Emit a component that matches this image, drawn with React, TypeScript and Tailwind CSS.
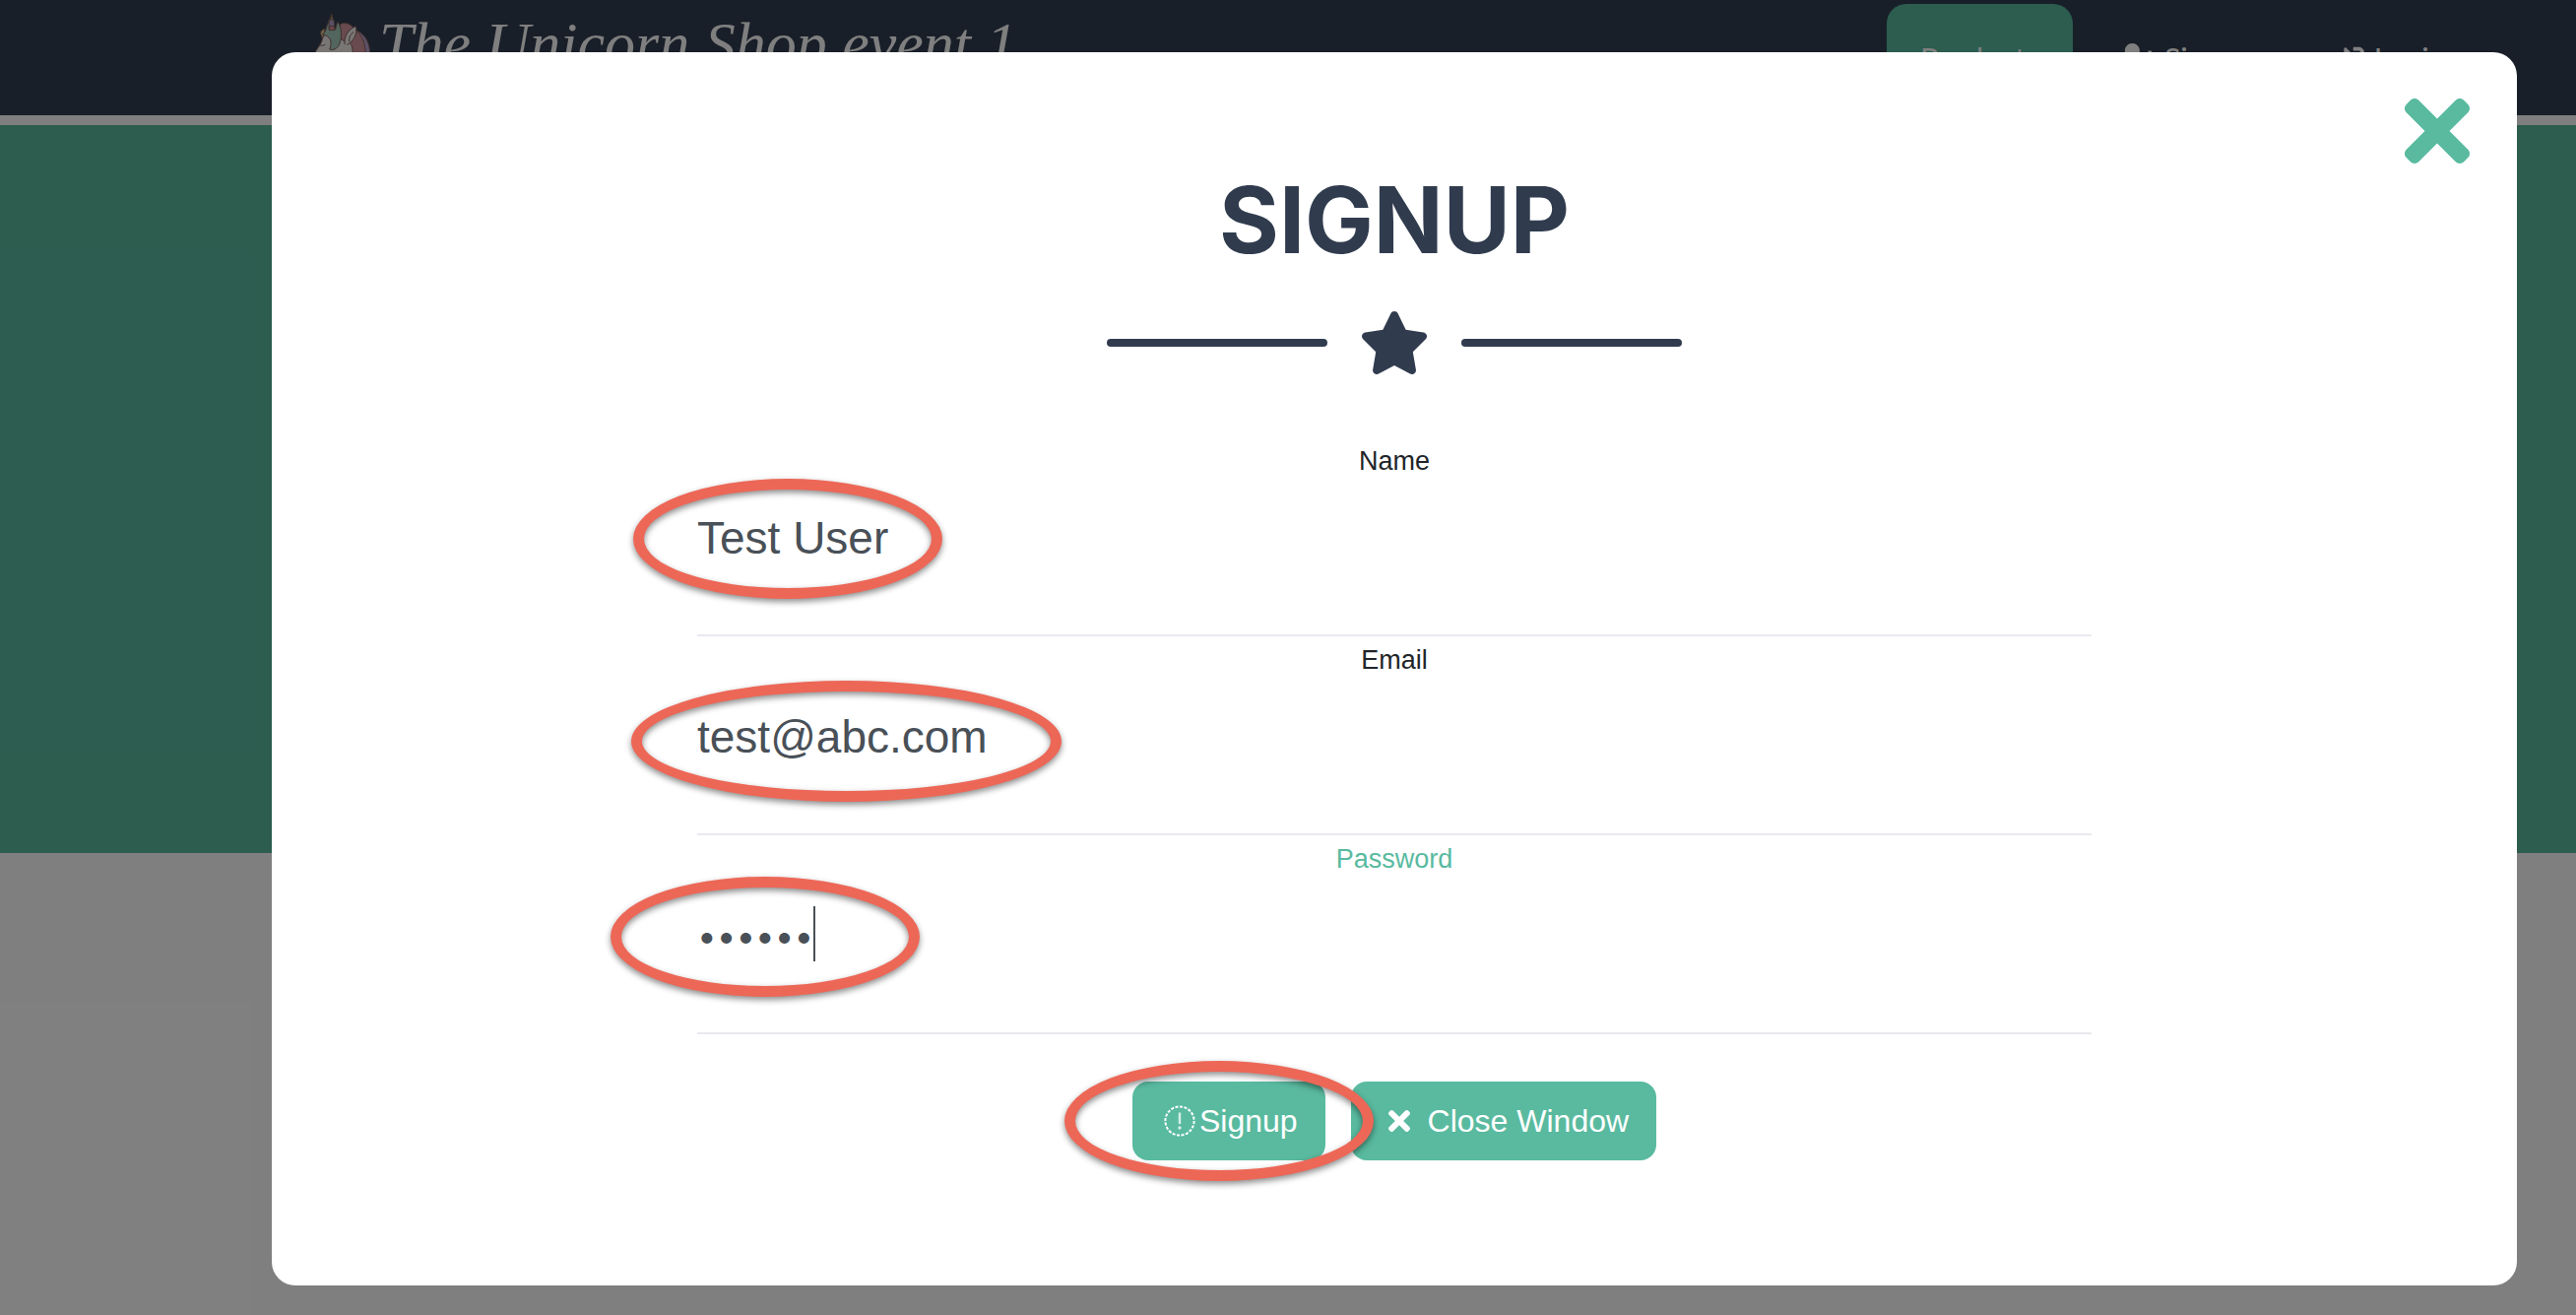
import { useId } from "react";
import { FaStar } from "react-icons/fa6";
import { FaSignInAlt, FaTimes, FaUserPlus } from "react-icons/fa";

function Ellipse({ className }: { className: string }) {
  return (
    <span
      aria-hidden="true"
      className={`pointer-events-none absolute rounded-[50%] border-[11px] border-[#ed6757] drop-shadow-[0_3px_3px_rgba(0,0,0,0.45)] ${className}`}
    />
  );
}

type FieldProps = {
  label: string;
  type: string;
  value: string;
  labelClass: string;
  inputClass: string;
  ellipse: string;
  caret?: boolean;
};

function Field({ label, type, value, labelClass, inputClass, ellipse, caret }: FieldProps) {
  const id = useId();
  return (
    <div className="relative flex h-[202px] flex-col items-center border-b-2 border-[#e9eaef]">
      <label htmlFor={id} className={`mt-1 text-[27px] leading-10 ${labelClass}`}>
        {label}
      </label>
      <input
        id={id}
        type={type}
        defaultValue={value}
        autoComplete="off"
        className={`mt-[22px] h-[72px] w-full bg-transparent text-[#495057] outline-none ${inputClass}`}
      />
      {caret && <span className="absolute top-[72px] left-[118px] h-14 w-0.5 bg-[#495057]" />}
      <Ellipse className={ellipse} />
    </div>
  );
}

function Unicorn() {
  return (
    <svg
      viewBox="51 0 192 300"
      className="mt-2.5 h-[100px] w-16"
      stroke="#80605a"
      strokeWidth="3"
      strokeLinejoin="round"
      strokeLinecap="round"
    >
      <path d="M185 62c30 12 44 44 42 80v60h-50z" fill="#b9a3cf" />
      <path d="M136 44c14-8 34-2 42 14 28 16 36 48 36 84v60h-70z" fill="#d0959e" />
      <path d="M56 140c4-16 18-28 24-44 4-18 12-28 24-32l48 34c28-6 24 40 24 102H56z" fill="#f1eeed" />
      <path d="M78 76c-4-8 2-16 12-18l-2 18-6 10z" fill="#e3c98a" />
      <path d="M92 62c4-10 4-18 10-26l6 22 14 2 6-24c14 14 16 56 2 76-8 8-18 12-26 8 10-22 2-42-20-44z" fill="#a4cbbf" />
      <path d="M150 104c-2-24 10-44 34-54 6 22-6 46-26 56" fill="#f1eeed" />
      <path d="M164 96c-2-10 4-22 12-28" fill="none" />
      <path d="M72 106c6 4 12 4 18 0" fill="none" />
      <path d="M104 44 110 12l8 32z" fill="#d9b978" />
      <path d="M103 30h14l3 30h-16z" fill="#b3a0d0" />
      <path d="M104 50h15v12h-15z" fill="#d9899a" />
    </svg>
  );
}

export default function App() {
  return (
    <div className="relative min-h-screen overflow-hidden bg-white font-['Liberation_Sans',sans-serif]">
      <header className="flex h-[117px] items-start justify-between bg-[#323e52] pr-[98px] pl-[317px] text-white">
        <a href="#home" className="flex items-start gap-1">
          <Unicorn />
          <span className="font-['Liberation_Serif',serif] text-[62px] leading-[88px] italic">
            The Unicorn Shop event 1
          </span>
        </a>
        <nav className="flex items-center gap-[13px] self-center font-['Lato',sans-serif] text-[31px] leading-[38px]">
          <a href="#products" className="rounded-[20px] bg-[#59ba9f] px-[34px] py-9">
            Products
          </a>
          <a href="#signup" className="flex items-center gap-2 px-[34px] py-9">
            <FaUserPlus className="h-[30px] w-[38px]" />
            Signup
          </a>
          <a href="#login" className="flex items-center gap-2.5 px-[34px] py-9">
            <FaSignInAlt className="size-[30px]" />
            Login
          </a>
        </nav>
      </header>
      <div className="mt-2.5 h-[739px] bg-[#59ba9f]" />

      <div className="absolute inset-0 bg-black/50 pt-[53px] pr-[60px] pl-[276px]">
        <section
          role="dialog"
          aria-label="Signup"
          className="relative flex flex-col items-center rounded-3xl bg-white pt-[122px] pb-[127px]"
        >
          <button type="button" aria-label="Close" className="absolute top-8 right-12 text-[#59ba9f]">
            <FaTimes className="h-24 w-[66px]" />
          </button>
          <h2 className="font-['Inter',sans-serif] text-[93px] leading-[96px] font-bold text-[#303c4e]">SIGNUP</h2>
          <div className="mt-[45px] flex items-center gap-8 text-[#303c4e]">
            <span className="h-2 w-56 rounded-full bg-[#303c4e]" />
            <FaStar className="h-16 w-[72px]" />
            <span className="h-2 w-56 rounded-full bg-[#303c4e]" />
          </div>
          <form className="mt-16 w-full max-w-[1416px]">
            <Field
              label="Name"
              type="text"
              value="Test User"
              labelClass="text-[#212529]"
              inputClass="text-[46px]"
              ellipse="top-[42px] -left-[65px] h-[122px] w-[314px]"
            />
            <Field
              label="Email"
              type="email"
              value="test@abc.com"
              labelClass="text-[#212529]"
              inputClass="text-[46px]"
              ellipse="top-[45px] -left-[67px] h-[123px] w-[437px]"
            />
            <Field
              label="Password"
              type="password"
              value="secret"
              labelClass="text-[#59ba9f]"
              inputClass="font-['Inter',sans-serif] text-[35px]"
              caret
              ellipse="top-[42px] -left-[88px] h-[122px] w-[314px]"
            />
            <div className="mt-12 flex justify-center gap-[26px] text-[32px] text-white">
              <div className="relative z-10">
                <button type="submit" className="flex h-20 items-center gap-1 rounded-2xl bg-[#59ba9f] pr-7 pl-8">
                  <svg viewBox="0 0 32 32" className="size-8" fill="none" stroke="currentColor">
                    <circle cx="16" cy="16" r="14.6" strokeWidth="2" pathLength="120" strokeDasharray="4 2" />
                    <path d="M16 7.5v11.5" strokeWidth="2.4" strokeOpacity="0.75" />
                    <circle cx="16" cy="23" r="1.7" stroke="none" fill="currentColor" fillOpacity="0.75" />
                  </svg>
                  Signup
                </button>
                <Ellipse className="-top-[21px] -left-[69px] h-[122px] w-[314px]" />
              </div>
              <button type="button" className="flex h-20 items-center gap-[18px] rounded-2xl bg-[#59ba9f] pr-7 pl-[38px]">
                <FaTimes className="h-8 w-[22px]" />
                Close Window
              </button>
            </div>
          </form>
        </section>
      </div>
    </div>
  );
}
